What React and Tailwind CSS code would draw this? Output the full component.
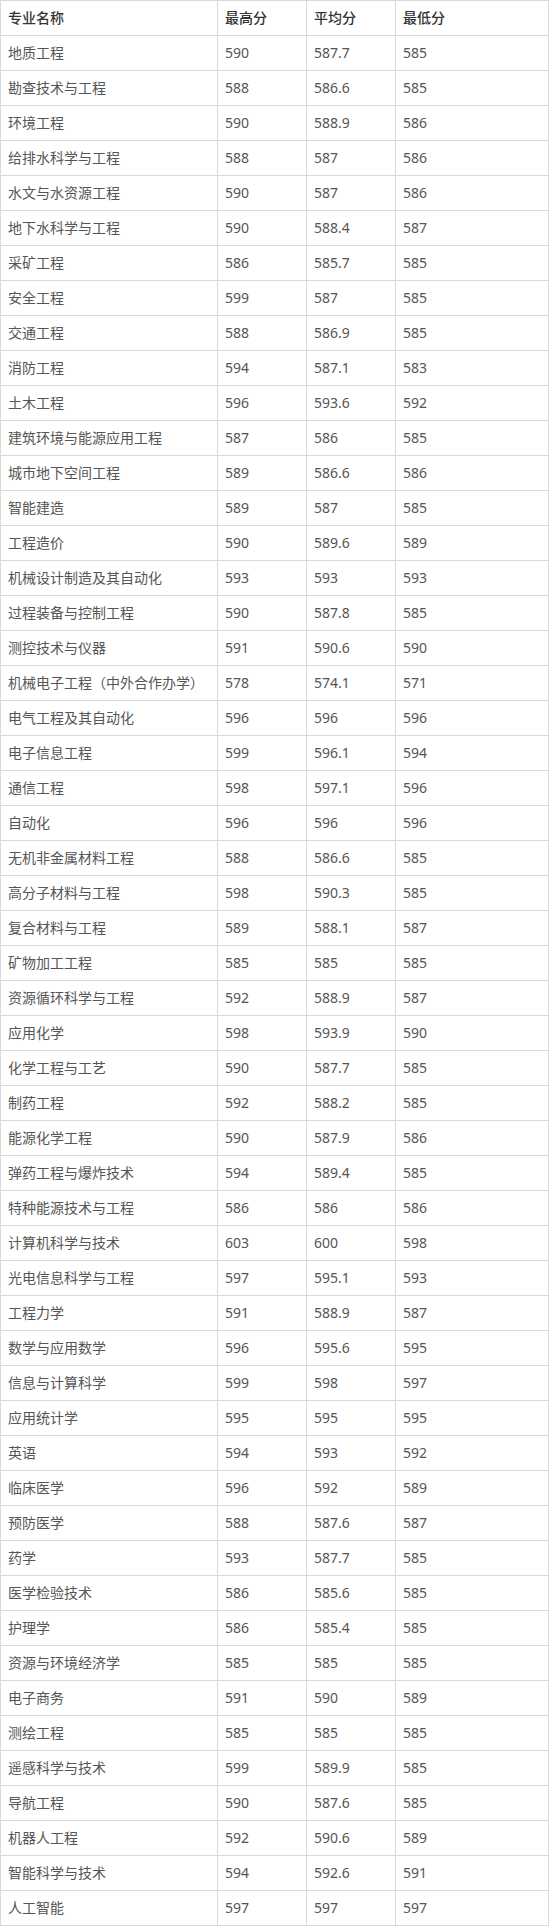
const rows = [
["地质工程","590","587.7","585"],
["勘查技术与工程","588","586.6","585"],
["环境工程","590","588.9","586"],
["给排水科学与工程","588","587","586"],
["水文与水资源工程","590","587","586"],
["地下水科学与工程","590","588.4","587"],
["采矿工程","586","585.7","585"],
["安全工程","599","587","585"],
["交通工程","588","586.9","585"],
["消防工程","594","587.1","583"],
["土木工程","596","593.6","592"],
["建筑环境与能源应用工程","587","586","585"],
["城市地下空间工程","589","586.6","586"],
["智能建造","589","587","585"],
["工程造价","590","589.6","589"],
["机械设计制造及其自动化","593","593","593"],
["过程装备与控制工程","590","587.8","585"],
["测控技术与仪器","591","590.6","590"],
["机械电子工程（中外合作办学）","578","574.1","571"],
["电气工程及其自动化","596","596","596"],
["电子信息工程","599","596.1","594"],
["通信工程","598","597.1","596"],
["自动化","596","596","596"],
["无机非金属材料工程","588","586.6","585"],
["高分子材料与工程","598","590.3","585"],
["复合材料与工程","589","588.1","587"],
["矿物加工工程","585","585","585"],
["资源循环科学与工程","592","588.9","587"],
["应用化学","598","593.9","590"],
["化学工程与工艺","590","587.7","585"],
["制药工程","592","588.2","585"],
["能源化学工程","590","587.9","586"],
["弹药工程与爆炸技术","594","589.4","585"],
["特种能源技术与工程","586","586","586"],
["计算机科学与技术","603","600","598"],
["光电信息科学与工程","597","595.1","593"],
["工程力学","591","588.9","587"],
["数学与应用数学","596","595.6","595"],
["信息与计算科学","599","598","597"],
["应用统计学","595","595","595"],
["英语","594","593","592"],
["临床医学","596","592","589"],
["预防医学","588","587.6","587"],
["药学","593","587.7","585"],
["医学检验技术","586","585.6","585"],
["护理学","586","585.4","585"],
["资源与环境经济学","585","585","585"],
["电子商务","591","590","589"],
["测绘工程","585","585","585"],
["遥感科学与技术","599","589.9","585"],
["导航工程","590","587.6","585"],
["机器人工程","592","590.6","589"],
["智能科学与技术","594","592.6","591"],
["人工智能","597","597","597"],
];

export default function App() {
  return (
    <div className="w-[549px] bg-white" style={{}}>
      <table className="w-[549px] table-fixed border-collapse text-[14px] font-['Noto_Sans','Noto_Sans_CJK_SC',sans-serif]">
        <colgroup>
          <col className="w-[217px]" />
          <col className="w-[89px]" />
          <col className="w-[89px]" />
          <col />
        </colgroup>
        <thead>
          <tr className="h-[35px]">
            {["专业名称","最高分","平均分","最低分"].map((h) => (
              <th key={h} className="border border-[#d9d9d9] px-[7px] py-0 text-left font-medium text-[#333] leading-none">{h}</th>
            ))}
          </tr>
        </thead>
        <tbody>
          {rows.map((r) => (
            <tr key={r[0]} className="h-[35px]">
              {r.map((c, i) => (
                <td key={i} className="border border-[#d9d9d9] px-[7px] py-0 text-left text-[#555] leading-none whitespace-nowrap">{c}</td>
              ))}
            </tr>
          ))}
        </tbody>
      </table>
    </div>
  );
}
